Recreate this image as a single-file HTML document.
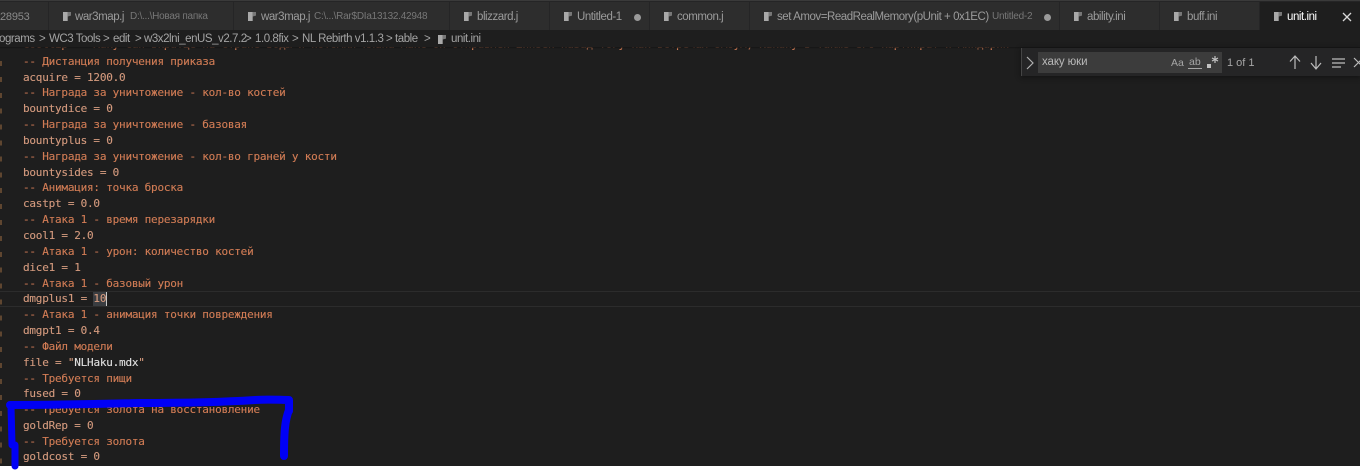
<!DOCTYPE html>
<html><head><meta charset="utf-8"><style>
html,body{margin:0;padding:0;background:#1e1e1e;width:1360px;height:470px;overflow:hidden}
*{box-sizing:border-box}
body{font-family:"Liberation Sans","Noto Sans CJK SC",sans-serif;position:relative}
.tabs{position:absolute;left:0;top:0;width:1360px;height:30px;background:#252526;border-top:1px solid #3a3a3a}
.tab{position:absolute;top:1px;height:29px;background:#2d2d2d;border-right:1px solid #252526;color:#9b9b9b;font-size:11.5px;line-height:30px;white-space:nowrap;letter-spacing:-.45px}
.tab small{font-size:10px;color:#777;position:absolute;top:0;letter-spacing:-.25px}
.tab i{position:absolute;top:10px;width:8px;height:9px;background:linear-gradient(90deg,#a9a9a9 55%,#777 55%);clip-path:polygon(0 0,100% 0,100% 40%,60% 50%,60% 100%,0 100%)}
.tab span{position:absolute;top:0}
.dot{position:absolute;width:7px;height:7px;border-radius:50%;background:#9a9a9a;top:12px}
.crumb{position:absolute;left:0;top:30px;width:1360px;height:17px;background:#1e1e1e;color:#a4a4a4;font-size:11.5px;line-height:18px;white-space:nowrap;letter-spacing:-.45px}
.crumb b{font-weight:normal;position:absolute;top:0}
.editor{position:absolute;left:0;top:47px;width:1360px;height:423px;overflow:hidden;font-family:"DejaVu Sans Mono","Liberation Mono",monospace;font-size:11px;letter-spacing:-.22px;color:#d49a7e;-webkit-text-stroke:.12px currentColor}
.l{position:absolute;left:23px;height:16px;line-height:16px;white-space:pre}
.c{color:#d17c55}
.find{position:absolute;left:1021px;top:48px;width:339px;height:28px;background:#252526;border-left:1px solid #454545;box-shadow:0 1px 5px #111}
.inp{position:absolute;left:16px;top:4px;width:184px;height:21px;background:#3c3c3c;color:#b9b9b9;font-size:11.5px;line-height:21px;padding-left:4px;letter-spacing:-.1px}
.find .t{position:absolute;color:#a6a6a6;white-space:nowrap}
svg.ic{position:absolute;left:0;top:0}
</style></head><body>
<div class="tabs">
<div class="tab" style="left:0;width:49px;color:#8a8a8a"><span style="left:0;font-size:11px;letter-spacing:-.2px">28953</span></div>
<div class="tab" style="left:49px;width:185px"><i style="left:14px"></i><span style="left:26px">war3map.j</span><small style="left:81px">D:\...\Новая папка</small></div>
<div class="tab" style="left:234px;width:216px"><i style="left:14px"></i><span style="left:27px">war3map.j</span><small style="left:80px">C:\...\Rar$DIa13132.42948</small></div>
<div class="tab" style="left:450px;width:100px"><i style="left:14px"></i><span style="left:27px">blizzard.j</span></div>
<div class="tab" style="left:550px;width:100px"><i style="left:14px"></i><span style="left:27px">Untitled-1</span><b class="dot" style="left:84px"></b></div>
<div class="tab" style="left:650px;width:100px"><i style="left:14px"></i><span style="left:27px">common.j</span></div>
<div class="tab" style="left:750px;width:310px"><i style="left:14px"></i><span style="left:27px">set Amov=ReadRealMemory(pUnit + 0x1EC)</span><small style="left:242px">Untitled-2</small><b class="dot" style="left:294px"></b></div>
<div class="tab" style="left:1060px;width:100px"><i style="left:14px"></i><span style="left:27px">ability.ini</span></div>
<div class="tab" style="left:1160px;width:100px"><i style="left:14px"></i><span style="left:27px">buff.ini</span></div>
<div class="tab" style="left:1260px;width:100px;background:#1e1e1e;color:#fff;border:0"><i style="left:14px"></i><span style="left:27px">unit.ini</span>
<svg width="12" height="12" style="position:absolute;left:81px;top:9px"><path d="M2 2L10 10M10 2L2 10" stroke="#d8d8d8" stroke-width="1.3" fill="none"/></svg></div>
</div>
<div class="crumb">
<b style="left:-1px">ograms</b><b style="left:39px">&gt;</b><b style="left:49px">WC3 Tools</b><b style="left:103px">&gt;</b><b style="left:113px">edit</b><b style="left:135px">&gt;</b><b style="left:144px">w3x2lni_enUS_v2.7.2</b><b style="left:245px">&gt;</b><b style="left:255px">1.0.8fix</b><b style="left:292px">&gt;</b><b style="left:302px">NL Rebirth v1.1.3</b><b style="left:386px">&gt;</b><b style="left:395px">table</b><b style="left:424px">&gt;</b>
<b style="left:438px;top:5px;width:8px;height:9px;background:linear-gradient(90deg,#a9a9a9 55%,#777 55%);clip-path:polygon(0 0,100% 0,100% 40%,60% 50%,60% 100%,0 100%)"></b><b style="left:451px">unit.ini</b>
</div>
<div class="editor">
<div style="position:absolute;left:0;top:9px;width:2px;height:414px;background:repeating-linear-gradient(180deg,transparent 0,transparent 5px,#5f4630 5px,#5f4630 10px,transparent 10px,transparent 15.9px)"></div>
<div style="position:absolute;left:0;top:244px;width:1360px;height:16px;border-top:1px solid #2c2c2c;border-bottom:1px solid #2c2c2c"></div>
<div style="position:absolute;left:93px;top:245px;width:13px;height:14px;background:#3a3d41"></div>
<div style="position:absolute;left:106px;top:245px;width:1px;height:14px;background:#c8c8c8"></div>
<div class="l c" style="top:-10px">cooltip =  Хаку сан вкратце на стране воды и потомки клана макс он отправлен шинsen назад тогу как встречал эмоум, Какаку в также его картинрат и миндарин</div>
<div class="l c" style="top:7px">-- Дистанция получения приказа</div>
<div class="l" style="top:23px">acquire = 1200.0</div>
<div class="l c" style="top:38px">-- Награда за уничтожение - кол-во костей</div>
<div class="l" style="top:54px">bountydice = 0</div>
<div class="l c" style="top:70px">-- Награда за уничтожение - базовая</div>
<div class="l" style="top:86px">bountyplus = 0</div>
<div class="l c" style="top:102px">-- Награда за уничтожение - кол-во граней у кости</div>
<div class="l" style="top:118px">bountysides = 0</div>
<div class="l c" style="top:133px">-- Анимация: точка броска</div>
<div class="l" style="top:149px">castpt = 0.0</div>
<div class="l c" style="top:165px">-- Атака 1 - время перезарядки</div>
<div class="l" style="top:181px">cool1 = 2.0</div>
<div class="l c" style="top:197px">-- Атака 1 - урон: количество костей</div>
<div class="l" style="top:213px">dice1 = 1</div>
<div class="l c" style="top:229px">-- Атака 1 - базовый урон</div>
<div class="l" style="top:244px">dmgplus1 = 10</div>
<div class="l c" style="top:260px">-- Атака 1 - анимация точки повреждения</div>
<div class="l" style="top:276px">dmgpt1 = 0.4</div>
<div class="l c" style="top:292px">-- Файл модели</div>
<div class="l" style="top:308px">file = "<span style="color:#e0e0e0">NLHaku.mdx</span>"</div>
<div class="l c" style="top:324px">-- Требуется пищи</div>
<div class="l" style="top:339px">fused = 0</div>
<div class="l c" style="top:355px">-- Требуется золота на восстановление</div>
<div class="l" style="top:371px">goldRep = 0</div>
<div class="l c" style="top:387px">-- Требуется золота</div>
<div class="l" style="top:402px">goldcost = 0</div>
</div>
<div style="position:absolute;left:0;top:47px;width:1360px;height:2px;background:linear-gradient(#141414,transparent)"></div>
<div style="position:absolute;left:0;top:466px;width:1360px;height:4px;background:#fff"></div>
<div class="find">
<svg width="12" height="14" style="position:absolute;left:3px;top:8px"><path d="M2 1L8 7L2 13" stroke="#b0b0b0" stroke-width="1.2" fill="none"/></svg>
<div class="inp">хаку юки</div>
<div class="t" style="left:149px;top:9px;font-size:10.5px">Aa</div>
<div class="t" style="left:166px;top:8px;font-size:10.5px;border-bottom:1px solid #a6a6a6;line-height:12px;padding:0 1px">ab</div>
<svg width="14" height="14" style="position:absolute;left:184px;top:7px"><rect x="1" y="9" width="4" height="4" fill="#c2c2c2"/><path d="M9 1V8M6 3L12 6M12 3L6 6" stroke="#c2c2c2" stroke-width="1.2"/></svg>
<div class="t" style="left:205px;top:9px;font-size:11px">1 of 1</div>
<svg width="88" height="18" style="position:absolute;left:266px;top:5px"><g stroke="#bdbdbd" stroke-width="1.2" fill="none"><path d="M7 16V4M2 8.5L7 3L12 8.5"/><path d="M28 3V15M23 10L28 16L33 10"/><path d="M44 6H57M44 10H57M44 14H53"/><path d="M66 5L75 14M75 5L66 14"/></g></svg>
</div>
<svg class="ic" width="1360" height="470" style="pointer-events:none"><g fill="none" stroke="#0000f5" stroke-linecap="round" stroke-linejoin="round">
<path d="M10 405C60 405 100 404 140 403C190 403 225 402 255 400C270 399 280 400 289 400L289 411" stroke-width="8"/>
<path d="M11 406L12 445" stroke-width="7"/>
<path d="M15 445L15 466" stroke-width="7"/>
<path d="M289 410C285 420 284 432 284 456" stroke-width="8"/>
</g></svg>
</body></html>
